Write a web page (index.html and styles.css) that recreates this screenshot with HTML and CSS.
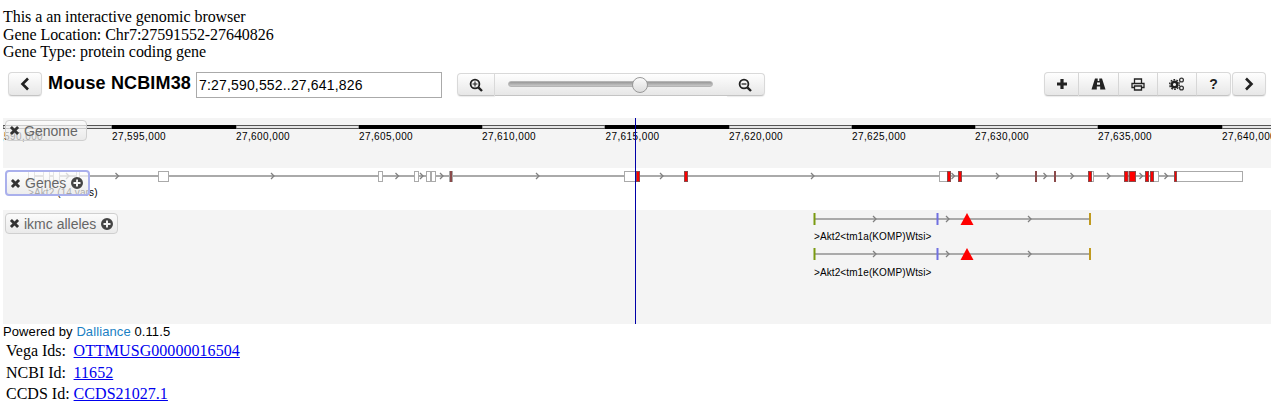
FILE: index.html
```html
<!DOCTYPE html>
<html lang="en">
<head>
    <meta charset="UTF-8">
    <title>Gene browser</title>
    <link rel="stylesheet" href="styles.css">
</head>
<body>
    <svg class="icon-defs" width="0" height="0">
        <defs>
            <symbol id="i-x" viewBox="0 0 12 12"><path d="M1 3.200L3.200 1 6 3.800 8.800 1 11 3.200 8.200 6 11 8.800 8.800 11 6 8.200 3.200 11 1 8.800 3.800 6z"/></symbol>
            <symbol id="i-plus-c" viewBox="0 0 12 12"><path fill-rule="evenodd" d="M6 0a6 6 0 1 0 0 12A6 6 0 0 0 6 0zM5 2.500h2V5h2.500v2H7v2.500H5V7H2.500V5H5z"/></symbol>
        </defs>
    </svg>

    <div class="intro">
        This a an interactive genomic browser<br>
        Gene Location: Chr7:27591552-27640826<br>
        Gene Type: protein coding gene
    </div>

    <div class="toolbar">
        <button class="btn btn-nav">
            <svg width="12" height="14" viewBox="0 0 12 14"><path d="M9 1.500L3.500 7 9 12.500" fill="none" stroke="#222" stroke-width="2.600"/></svg>
        </button>
        <span class="species">Mouse NCBIM38</span>
        <input class="location" type="text" value="7:27,590,552..27,641,826">

        <div class="btn-group zoom-group">
            <button class="btn btn-zoom">
                <svg width="14" height="14" viewBox="0 0 14 14"><circle cx="6" cy="6" r="4.400" fill="none" stroke="#222" stroke-width="1.800"/><path d="M9.300 9.300L13 13" stroke="#222" stroke-width="2.400"/><path d="M6 3.600v4.800M3.600 6h4.800" stroke="#222" stroke-width="1.100"/></svg>
            </button>
            <div class="slider">
                <div class="slider-track"></div>
                <div class="slider-thumb"></div>
            </div>
            <button class="btn btn-zoom">
                <svg width="14" height="14" viewBox="0 0 14 14"><circle cx="6" cy="6" r="4.400" fill="none" stroke="#222" stroke-width="1.800"/><path d="M9.300 9.300L13 13" stroke="#222" stroke-width="2.400"/><path d="M3.600 6h4.800" stroke="#222" stroke-width="1.300"/></svg>
            </button>
        </div>

        <div class="right-tools">
            <div class="btn-group">
                <button class="btn btn-add">
                    <svg width="12" height="12" viewBox="0 0 12 12"><path d="M4.400 1h3.200v3.400H11v3.200H7.600V11H4.400V7.600H1V4.400h3.400z" fill="#222"/></svg>
                </button>
                <button class="btn btn-find">
                    <svg width="15" height="12" viewBox="0 0 15 12"><path fill="#222" d="M4 .500h2.700V3h1.600V.500H11l3.500 11H9.200V8.500H5.800v3H.500zM6 4.500v2.300h3V4.500z"/></svg>
                </button>
                <button class="btn btn-print">
                    <svg width="14" height="13" viewBox="0 0 14 13"><path fill="none" stroke="#222" stroke-width="1.300" d="M3.500 5V1h7v4M3 9.500H1V5.500h12v4h-2M3.500 8h7v4h-7z"/></svg>
                </button>
                <button class="btn btn-gears">
                    <svg width="16" height="14" viewBox="0 0 16 14"><circle cx="5.500" cy="7.500" r="2.800" fill="none" stroke="#222" stroke-width="2.400"/><circle cx="5.500" cy="7.500" r="4.800" fill="none" stroke="#222" stroke-width="1.400" stroke-dasharray="1.700 1.300"/><circle cx="12.500" cy="3" r="1.900" fill="none" stroke="#333" stroke-width="1.300"/><circle cx="12.500" cy="11" r="1.900" fill="none" stroke="#333" stroke-width="1.300"/></svg>
                </button>
                <button class="btn btn-help">?</button>
            </div>
            <button class="btn btn-nav">
                <svg width="12" height="14" viewBox="0 0 12 14"><path d="M3 1.500L8.500 7 3 12.500" fill="none" stroke="#222" stroke-width="2.600"/></svg>
            </button>
        </div>
    </div>

    <div class="browser">
        <div class="track track-ruler">
            <svg width="1268" height="50" viewBox="3 118 1268 50">
                <g class="ruler-off">
                    <rect x="3" y="125.500" width="109" height="3"/>
                    <rect x="236" y="125.500" width="123" height="3"/>
                    <rect x="482" y="125.500" width="123" height="3"/>
                    <rect x="729" y="125.500" width="123" height="3"/>
                    <rect x="975" y="125.500" width="123" height="3"/>
                    <rect x="1222" y="125.500" width="50" height="3"/>
                </g>
                <g class="ruler-on">
                    <rect x="112" y="125" width="124" height="4"/>
                    <rect x="359" y="125" width="123" height="4"/>
                    <rect x="605" y="125" width="124" height="4"/>
                    <rect x="852" y="125" width="123" height="4"/>
                    <rect x="1098" y="125" width="124" height="4"/>
                </g>
                <g class="ruler-text">
                    <text x="-11" y="140">27,590,000</text>
                    <text x="112" y="140">27,595,000</text>
                    <text x="236" y="140">27,600,000</text>
                    <text x="359" y="140">27,605,000</text>
                    <text x="482" y="140">27,610,000</text>
                    <text x="605.500" y="140">27,615,000</text>
                    <text x="729" y="140">27,620,000</text>
                    <text x="852" y="140">27,625,000</text>
                    <text x="975" y="140">27,630,000</text>
                    <text x="1098" y="140">27,635,000</text>
                    <text x="1222" y="140">27,640,000</text>
                </g>
            </svg>
        </div>

        <div class="track track-genes">
            <svg width="1268" height="42" viewBox="3 168 1268 42">
                <path class="intron" d="M28 176H1174"/>
                <path class="chev" d="M66 173l3 3-3 3M115.500 173l3 3-3 3M271 173l3 3-3 3M395.500 173l3 3-3 3M420 173l3 3-3 3M440 173l3 3-3 3M536 173l3 3-3 3M660 173l3 3-3 3M811 173l3 3-3 3M951.500 173l3 3-3 3M996 173l3 3-3 3M1043.500 173l3 3-3 3M1070.500 173l3 3-3 3M1107 173l3 3-3 3M1139.500 173l3 3-3 3M1164.500 173l3 3-3 3"/>
                <g class="exon">
                    <rect x="28.500" y="171.500" width="6" height="10"/>
                    <rect x="43.500" y="171.500" width="6" height="10"/>
                    <rect x="53.500" y="171.500" width="6" height="10"/>
                    <rect x="76.500" y="171.500" width="3" height="10"/>
                    <rect x="158.500" y="171.500" width="10" height="10"/>
                    <rect x="378.500" y="171.500" width="4" height="10"/>
                    <rect x="414.500" y="171.500" width="4" height="10"/>
                    <rect x="426.500" y="171.500" width="4" height="10"/>
                    <rect x="431.500" y="171.500" width="4" height="10"/>
                    <rect x="449.500" y="171.500" width="3" height="10"/>
                    <rect x="624.500" y="171.500" width="12" height="10"/>
                    <rect x="939.500" y="171.500" width="11" height="10"/>
                    <rect x="1088.500" y="171.500" width="5" height="10"/>
                    <rect x="1150.500" y="171.500" width="8" height="10"/>
                    <rect x="1176.500" y="171.500" width="66" height="10"/>
                </g>
                <g class="exon exon-red">
                    <rect x="450.500" y="171.500" width="1" height="10"/>
                    <rect x="636.500" y="171.500" width="3" height="10"/>
                    <rect x="684.500" y="171.500" width="3" height="10"/>
                    <rect x="947.500" y="171.500" width="3" height="10"/>
                    <rect x="958.500" y="171.500" width="3" height="10"/>
                    <rect x="1035.500" y="171.500" width="1" height="10"/>
                    <rect x="1054.500" y="171.500" width="1" height="10"/>
                    <rect x="1088.500" y="171.500" width="3" height="10"/>
                    <rect x="1124.500" y="171.500" width="3.500" height="10"/>
                    <rect x="1129.500" y="171.500" width="6" height="10"/>
                    <rect x="1145.500" y="171.500" width="3" height="10"/>
                    <rect x="1150.500" y="171.500" width="3" height="10"/>
                    <rect x="1174.500" y="171.500" width="2" height="10"/>
                </g>
                <text class="feature-label" x="28" y="196">&gt;Akt2 (14 vars)</text>
            </svg>
        </div>

        <div class="track track-alleles">
            <svg width="1268" height="114" viewBox="3 210 1268 114">
                <g>
                    <path class="intron" d="M814 219H1090"/>
                    <path class="chev" d="M873 216l3 3-3 3M946 216l3 3-3 3M1028 216l3 3-3 3"/>
                    <rect class="tick-green" x="813.500" y="213" width="2" height="12"/>
                    <rect class="tick-blue" x="936.500" y="213" width="2" height="12"/>
                    <rect class="tick-gold" x="1089" y="213" width="2" height="12"/>
                    <path class="cassette" d="M967 213l6.500 12h-13z"/>
                    <text class="feature-label" x="814" y="240">&gt;Akt2&lt;tm1a(KOMP)Wtsi&gt;</text>
                </g>
                <g>
                    <path class="intron" d="M814 254H1090"/>
                    <path class="chev" d="M873 251l3 3-3 3M946 251l3 3-3 3M1028 251l3 3-3 3"/>
                    <rect class="tick-green" x="813.500" y="248" width="2" height="12"/>
                    <rect class="tick-blue" x="936.500" y="248" width="2" height="12"/>
                    <rect class="tick-gold" x="1089" y="248" width="2" height="12"/>
                    <path class="cassette" d="M967 248l6.500 12h-13z"/>
                    <text class="feature-label" x="814" y="275.500">&gt;Akt2&lt;tm1e(KOMP)Wtsi&gt;</text>
                </g>
            </svg>
        </div>

        <div class="viewline"></div>

        <div class="track-label label-genome">
            <svg class="lab-x"><use href="#i-x"/></svg>Genome
        </div>
        <div class="track-label label-genes">
            <svg class="lab-x"><use href="#i-x"/></svg>Genes<svg class="lab-plus"><use href="#i-plus-c"/></svg>
        </div>
        <div class="track-label label-alleles">
            <svg class="lab-x"><use href="#i-x"/></svg>ikmc alleles<svg class="lab-plus"><use href="#i-plus-c"/></svg>
        </div>
    </div>

    <div class="powered">Powered by <a href="#">Dalliance</a> 0.11.5</div>

    <table class="gene-info">
        <tr><td>Vega Ids:</td><td><a href="#">OTTMUSG00000016504</a></td></tr>
        <tr><td>NCBI Id:</td><td><a href="#">11652</a></td></tr>
        <tr><td>CCDS Id:</td><td><a href="#">CCDS21027.1</a></td></tr>
    </table>
</body>
</html>
```

FILE: styles.css
```css
/* Page */
body {
    margin: 0;
    padding: 8px 0 0 3px;
    font-family: "Liberation Serif", serif;
    font-size: 16px;
    line-height: 18px;
    color: #000;
    background-color: #fff;
    overflow: hidden;
}

.icon-defs {
    position: absolute;
}

.intro {
    line-height: 17.500px;
    letter-spacing: -0.06px;
}

/* Toolbar */
.toolbar {
    display: flex;
    align-items: flex-start;
    height: 46px;
    margin-top: 11.500px;
    padding-left: 5px;
    padding-right: 5px;
    font-family: "Liberation Sans", sans-serif;
}

.btn {
    display: flex;
    align-items: center;
    justify-content: center;
    height: 24px;
    padding: 0;
    border: 1px solid #d9d9d9;
    border-bottom-color: #c4c4c4;
    border-radius: 4px;
    background: linear-gradient(#fefefe, #e7e7e7);
    box-shadow: 0 1px 1px rgba(0, 0, 0, 0.08);
}

.btn-nav {
    width: 34px;
}

.species {
    margin-top: 1px;
    margin-left: 6px;
    font-size: 18px;
    font-weight: bold;
    line-height: 21px;
    letter-spacing: 0.15px;
}

.location {
    box-sizing: border-box;
    width: 246px;
    height: 26px;
    margin-left: 5px;
    padding: 2px 2px;
    border: 1px solid #aaa;
    font-family: "Liberation Sans", sans-serif;
    font-size: 14px;
    letter-spacing: 0.17px;
    color: #000;
}

.btn-group {
    display: flex;
}

.btn-group .btn {
    border-radius: 0;
    border-left-width: 0;
}

.btn-group .btn:first-child {
    border-left-width: 1px;
    border-radius: 4px 0 0 4px;
}

.btn-group .btn:last-child {
    border-radius: 0 4px 4px 0;
}

.zoom-group {
    margin-left: 15px;
    margin-top: 1px;
}

.btn-zoom {
    width: 38px;
    height: 23px;
}

.slider {
    position: relative;
    box-sizing: border-box;
    width: 232px;
    height: 23px;
    border-top: 1px solid #d9d9d9;
    border-bottom: 1px solid #c4c4c4;
    background: linear-gradient(#fefefe, #e7e7e7);
    padding: 7px 14px 0 13px;
}

.slider-track {
    height: 6px;
    border-radius: 3px;
    background: linear-gradient(#999, #c8c8c8);
    border: 1px solid #b5b5b5;
    box-sizing: border-box;
}

.slider-thumb {
    position: absolute;
    left: 137px;
    top: 3px;
    width: 14px;
    height: 14px;
    border: 1px solid #999;
    border-radius: 50%;
    background: linear-gradient(#fafafa, #ddd);
}

.right-tools {
    display: flex;
    gap: 1px;
    margin-left: auto;
}

.btn-add {
    width: 35px;
}

.btn-find {
    width: 40px;
}

.btn-print,
.btn-gears {
    width: 39px;
}

.btn-help {
    width: 34px;
    font-family: "Liberation Sans", sans-serif;
    font-size: 14px;
    font-weight: bold;
    color: #222;
}

/* Tracks */
.browser {
    position: relative;
    width: 1268px;
}

.track svg {
    display: block;
}

.track-ruler {
    height: 50px;
    background-color: #f4f4f4;
}

.track-genes {
    height: 42px;
    background-color: #fff;
}

.track-alleles {
    height: 114px;
    background-color: #f4f4f4;
}

.ruler-off rect {
    fill: #e4e4e4;
    stroke: #555;
    stroke-width: 1;
}

.ruler-on rect {
    fill: #000;
}

.ruler-text text {
    font-family: "Liberation Sans", sans-serif;
    font-size: 10px;
    letter-spacing: 0.4px;
    fill: #000;
}

.feature-label {
    font-family: "Liberation Sans", sans-serif;
    font-size: 10px;
    letter-spacing: 0.1px;
    fill: #000;
}

.intron {
    fill: none;
    stroke: #aaa;
    stroke-width: 2;
}

.chev {
    fill: none;
    stroke: #808080;
    stroke-width: 1.300;
}

.exon rect {
    fill: #fff;
    stroke: #aaa;
    stroke-width: 1;
}

.exon-red rect {
    fill: #f00;
    stroke: #8a4a4a;
}

.tick-green {
    fill: #7a9a10;
}

.tick-blue {
    fill: #7070e0;
}

.tick-gold {
    fill: #c09a20;
}

.cassette {
    fill: #f00;
}

.viewline {
    position: absolute;
    left: 632px;
    top: 0;
    width: 1px;
    height: 206px;
    background-color: #0000a8;
}

/* Track labels sit over the track content */
.track-label {
    position: absolute;
    display: flex;
    align-items: center;
    box-sizing: border-box;
    padding-left: 3px;
    border: 1px solid #cfcfcf;
    border-radius: 4px;
    background: linear-gradient(rgba(254, 254, 254, 0.72), rgba(230, 230, 230, 0.72));
    font-family: "Liberation Sans", sans-serif;
    font-size: 14px;
    color: #666;
}

.lab-x {
    width: 11px;
    height: 11px;
    margin-right: 4px;
    fill: #333;
}

.lab-plus {
    width: 12px;
    height: 12px;
    margin-left: 5px;
    fill: #444;
}

.label-genome {
    left: 2px;
    top: 2px;
    width: 82px;
    height: 21px;
}

.label-genes {
    left: 2px;
    top: 52px;
    width: 85px;
    height: 26px;
    padding-left: 3px;
    border: 2px solid #aab0ec;
}

.label-alleles {
    left: 2px;
    top: 95px;
    width: 113px;
    height: 21px;
}

/* Below the browser */
.powered {
    height: 15px;
    font-family: "Liberation Sans", sans-serif;
    font-size: 13px;
    line-height: 15px;
    letter-spacing: 0.1px;
}

.powered a {
    color: #1a7fc4;
    text-decoration: none;
}

.gene-info {
    border-collapse: separate;
    border-spacing: 2px;
}

.gene-info td {
    padding: 1px;
    line-height: 17.500px;
}

.gene-info td:first-child {
    padding-right: 1px;
}

.gene-info a {
    letter-spacing: 0.05px;
}
```
